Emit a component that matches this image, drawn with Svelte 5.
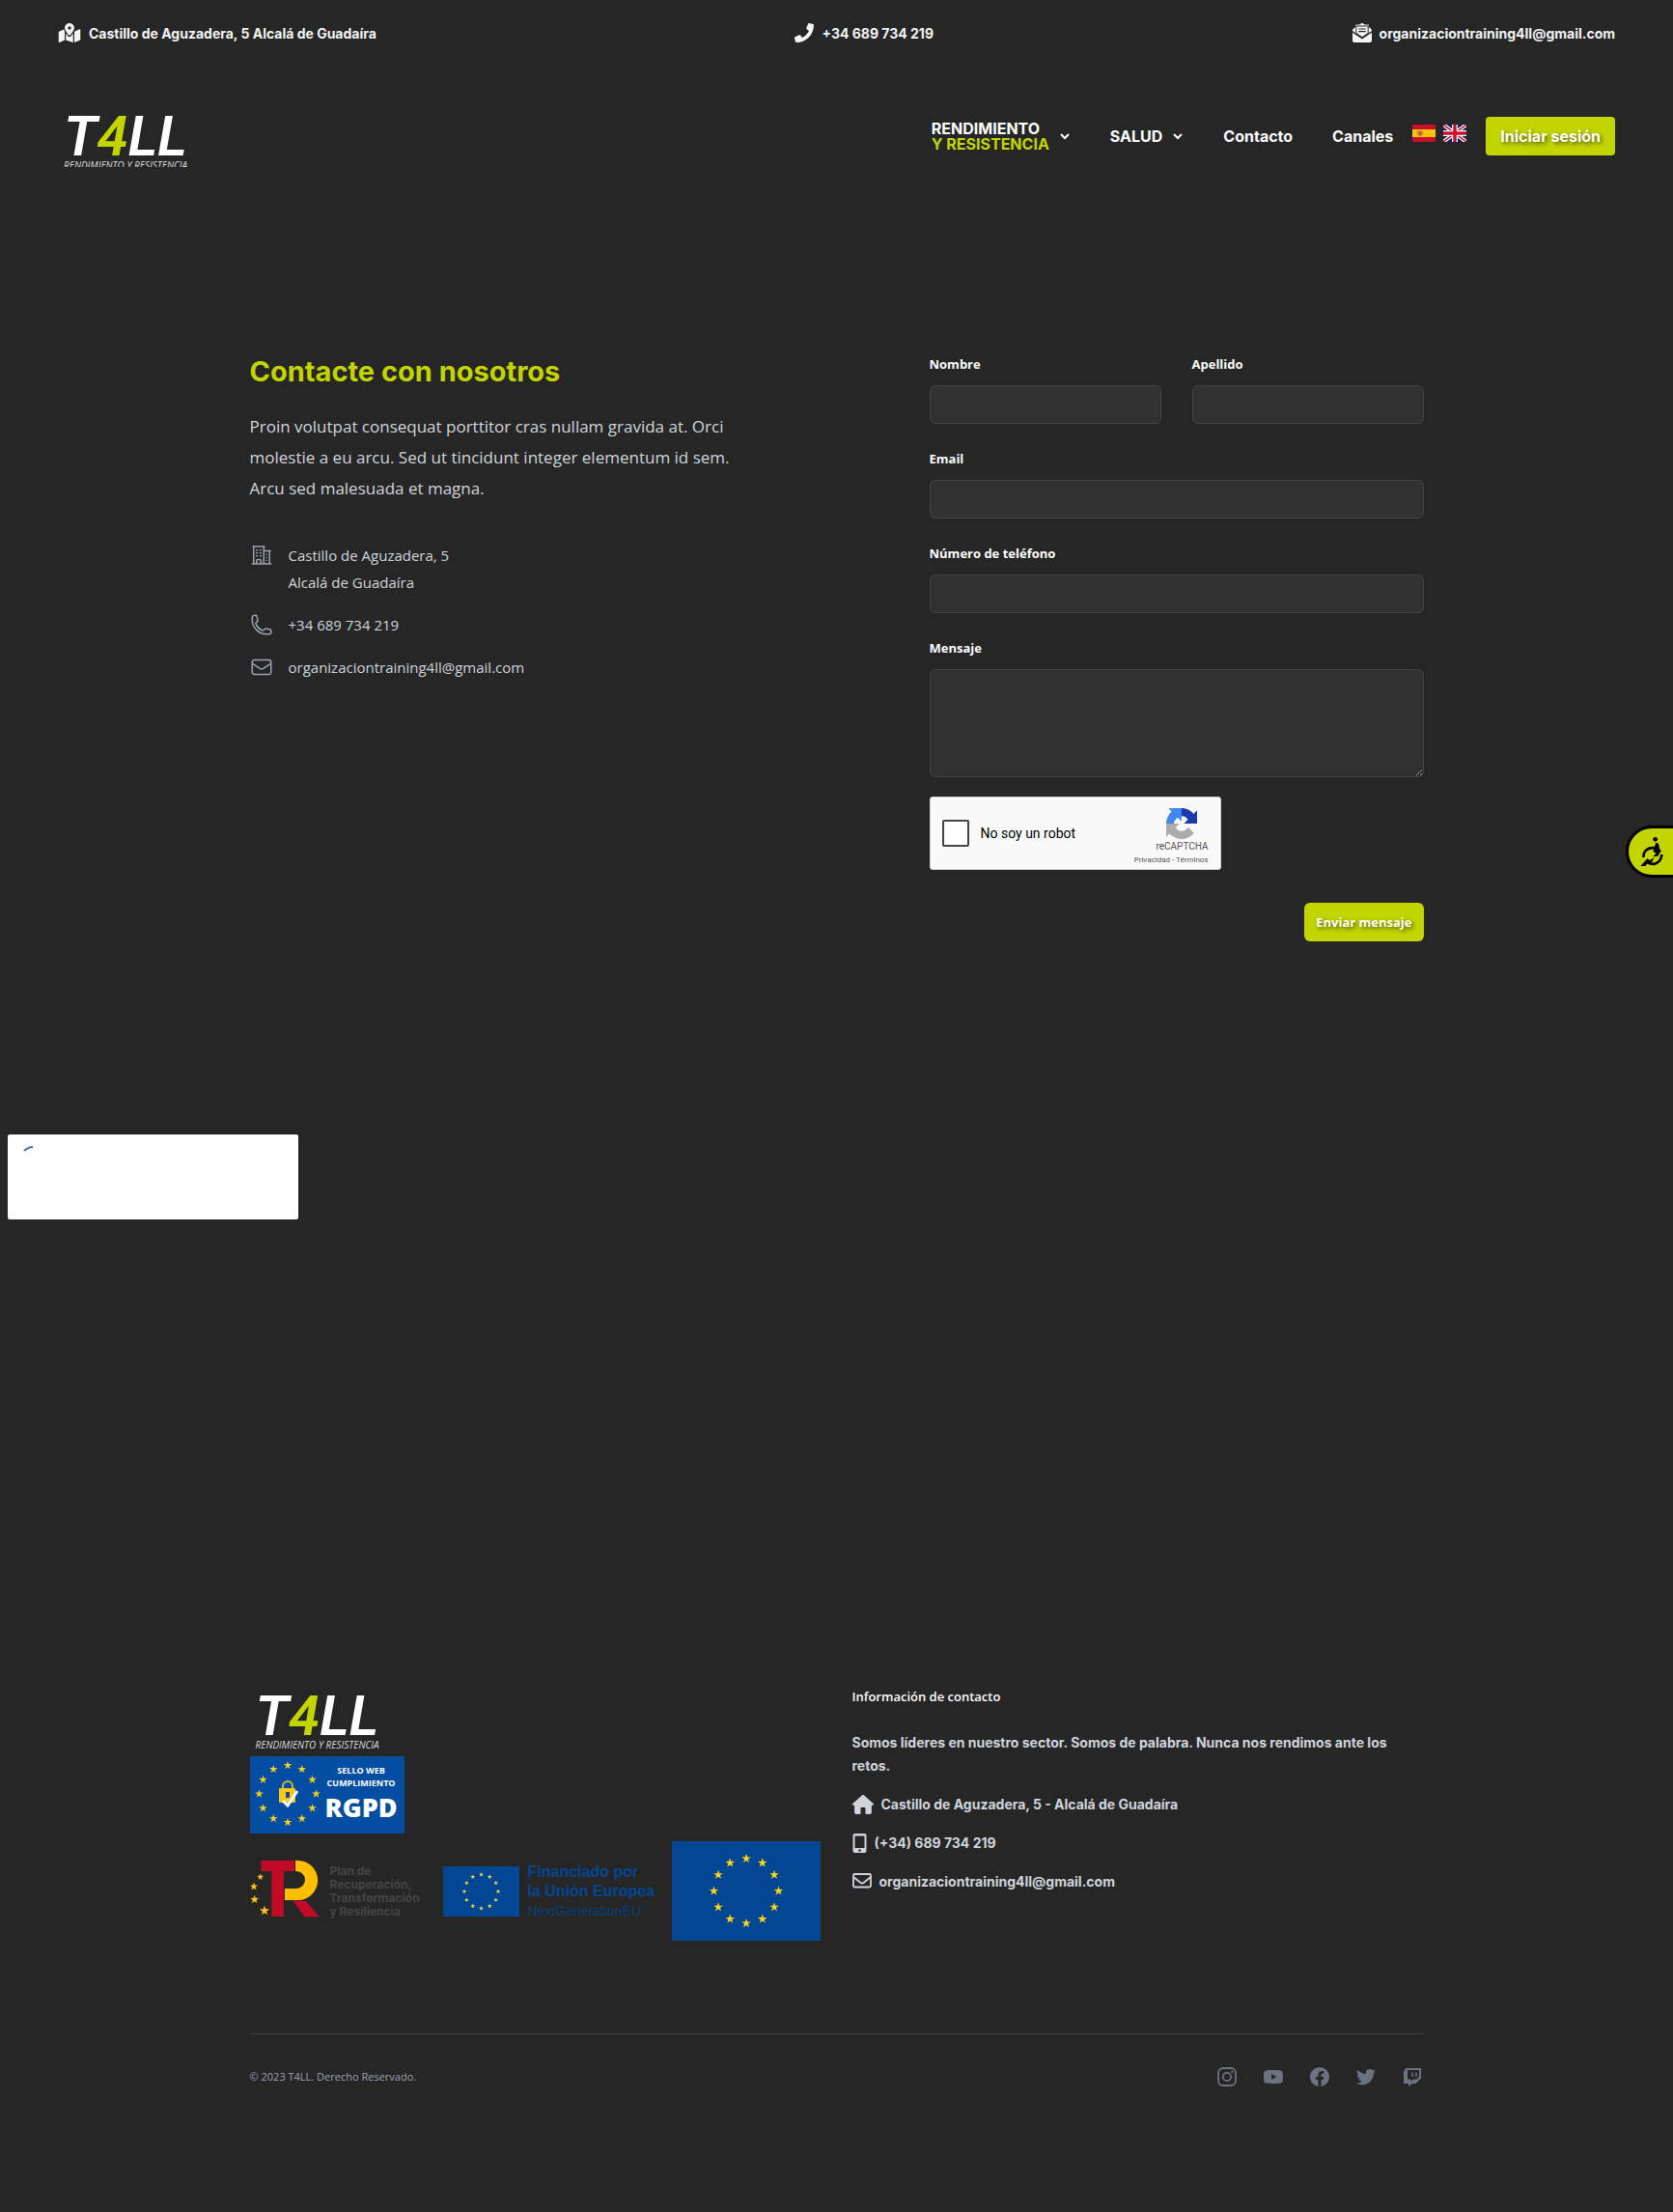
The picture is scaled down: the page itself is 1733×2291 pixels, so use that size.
<script>
  function star(cx, cy, r) {
    const pts = [];
    for (let i = 0; i < 10; i++) {
      const a = (Math.PI / 5) * i - Math.PI / 2;
      const d = i % 2 ? r * 0.4 : r;
      pts.push(`${(cx + d * Math.cos(a)).toFixed(2)},${(cy + d * Math.sin(a)).toFixed(2)}`);
    }
    return pts.join(' ');
  }
  function ring(cx, cy, radius, r) {
    return Array.from({ length: 12 }, (_, i) => {
      const a = (Math.PI / 6) * i;
      return star(cx + radius * Math.sin(a), cy - radius * Math.cos(a), r);
    });
  }
  const planStars = [star(89, 609, 11), star(69, 639, 13), star(71, 679, 14), star(102, 714, 16)];
</script>

{#snippet brand()}
  <span class="brand-name">T<b>4</b>LL</span>
  <span class="brand-tag">RENDIMIENTO Y RESISTENCIA</span>
{/snippet}

{#snippet chevron()}
  <svg class="chevron" viewBox="0 0 12 12" aria-hidden="true"><path d="M2 4l4 4 4-4" fill="none" stroke="currentColor" stroke-width="2" /></svg>
{/snippet}

<header>
  <div class="topbar">
    <span class="contact">
      <svg width="24" height="20" viewBox="0 0 576 512" aria-hidden="true"><path fill="currentColor" d="M288 0c-69.59 0-126 56.41-126 126 0 56.26 82.35 158.8 113.9 196.02 6.39 7.54 17.82 7.54 24.2 0C331.65 284.8 414 182.26 414 126 414 56.41 357.59 0 288 0zm0 168c-23.2 0-42-18.8-42-42s18.8-42 42-42 42 18.8 42 42-18.8 42-42 42zM20.12 215.95A32.006 32.006 0 0 0 0 245.66v250.32c0 11.32 11.43 19.06 21.94 14.86L160 448V214.92c-8.84-15.98-16.07-31.54-21.25-46.42L20.12 215.95zM288 359.67c-14.07 0-27.38-6.18-36.51-16.96-19.66-23.2-40.57-49.62-59.49-76.72v182l192 64V266c-18.92 27.09-39.82 53.52-59.49 76.72-9.13 10.77-22.44 16.95-36.51 16.95zm266.06-198.51L416 224v288l139.88-55.95A31.996 31.996 0 0 0 576 426.34V176.02c0-11.32-11.43-19.06-21.94-14.86z" /></svg>
      Castillo de Aguzadera, 5 Alcalá de Guadaíra
    </span>
    <span class="contact">
      <svg width="20" height="20" viewBox="0 0 512 512" aria-hidden="true"><path fill="currentColor" d="M493.4 24.6l-104-24c-11.3-2.6-22.9 3.3-27.5 13.9l-48 112c-4.2 9.8-1.4 21.3 6.9 28l60.6 49.6c-36 76.7-98.9 140.5-177.2 177.2l-49.6-60.6c-6.8-8.3-18.2-11.1-28-6.9l-112 48C3.9 366.5-2 378.1.6 389.4l24 104C27.1 504.2 36.7 512 48 512c256.1 0 464-207.5 464-464 0-11.2-7.7-20.9-18.6-23.4z" /></svg>
      +34 689 734 219
    </span>
    <span class="contact">
      <svg width="20" height="20" viewBox="0 0 20 20" aria-hidden="true"><path fill="currentColor" d="M10 0c.9 0 1.7.7 2.6 1.4h3c.8 0 1.3.6 1.3 1.3v1.4l2.3 1.9c.5.4.8.9.8 1.5v.6L10 14.8 0 8.1v-.6c0-.6.3-1.1.8-1.5l2.3-1.9V2.7c0-.7.5-1.3 1.3-1.3h3C8.3.7 9.1 0 10 0z" /><path fill="currentColor" d="M0 9.8l10 6.7 10-6.7v8.3c0 1-.8 1.9-1.9 1.9H1.9C.8 20 0 19.1 0 18.1z" /><path d="M3.8 3v7.3l6.2 4.3 6.2-4.3V3z" fill="#f4f4f4" stroke="#262626" stroke-width="1" /><path d="M6.3 6h7.4M6.3 8.7h7.4" stroke="#262626" stroke-width="1.2" /></svg>
      organizaciontraining4ll@gmail.com
    </span>
  </div>
  <div class="navbar">
    <a class="brand clipped" href="#inicio">{@render brand()}</a>
    <nav>
      <button class="nav-item two-line" type="button"><span>RENDIMIENTO<br /><em>Y RESISTENCIA</em></span>{@render chevron()}</button>
      <button class="nav-item" type="button">SALUD{@render chevron()}</button>
      <a class="nav-item" href="#contacto">Contacto</a>
      <a class="nav-item" href="#canales">Canales</a>
    </nav>
    <div class="flags">
      <button type="button" aria-label="Español">
        <svg viewBox="0 0 24 18" width="24" height="18"><rect width="24" height="18" rx="1" fill="#c8102e" /><rect y="5" width="24" height="8" fill="#ffc400" /><path d="M6 6.5h4v3.5a2 2 0 0 1-4 0z" fill="#c4633b" /><path d="M5 6v5M11 7v4" stroke="#b08a5a" /></svg>
      </button>
      <button type="button" aria-label="English">
        <svg viewBox="0 0 24 18" width="24" height="18"><rect width="24" height="18" rx="1" fill="#012169" /><path d="M0 0l24 18M24 0L0 18" stroke="#fff" stroke-width="4" /><path d="M0 0l24 18M24 0L0 18" stroke="#c8102e" stroke-width="1.5" /><path d="M12 0v18M0 9h24" stroke="#fff" stroke-width="6" /><path d="M12 0v18M0 9h24" stroke="#c8102e" stroke-width="3.5" /></svg>
      </button>
    </div>
    <button class="primary login" type="button">Iniciar sesión</button>
  </div>
</header>

<main>
  <section class="intro">
    <h1>Contacte con nosotros</h1>
    <p>Proin volutpat consequat porttitor cras nullam gravida at. Orci molestie a eu arcu. Sed ut tincidunt integer elementum id sem. Arcu sed malesuada et magna.</p>
    <ul>
      <li>
        <svg viewBox="0 0 24 24" aria-hidden="true"><path d="M2.25 21h19.5m-18-18v18m10.5-18v18m6-13.5V21M6.75 6.75h.75m-.75 3h.75m-.75 3h.75m3-6h.75m-.75 3h.75m-.75 3h.75M6.75 21v-3.375c0-.621.504-1.125 1.125-1.125h2.25c.621 0 1.125.504 1.125 1.125V21M3 3h12m-.75 4.5H21m-3.75 3.75h.008v.008h-.008v-.008zm0 3h.008v.008h-.008v-.008zm0 3h.008v.008h-.008v-.008z" /></svg>
        <span>Castillo de Aguzadera, 5<br />Alcalá de Guadaíra</span>
      </li>
      <li>
        <svg viewBox="0 0 24 24" aria-hidden="true"><path d="M2.25 6.75c0 8.284 6.716 15 15 15h2.25a2.25 2.25 0 002.25-2.25v-1.372c0-.516-.351-.966-.852-1.091l-4.423-1.106c-.44-.11-.902.055-1.173.417l-.97 1.293c-.282.376-.769.542-1.21.38a12.035 12.035 0 01-7.143-7.143c-.162-.441.004-.928.38-1.21l1.293-.97c.363-.271.527-.734.417-1.173L6.963 3.102a1.125 1.125 0 00-1.091-.852H4.5A2.25 2.25 0 002.25 4.5v2.25z" /></svg>
        <a href="tel:+34689734219">+34 689 734 219</a>
      </li>
      <li>
        <svg viewBox="0 0 24 24" aria-hidden="true"><path d="M21.75 6.75v10.5a2.25 2.25 0 01-2.25 2.25h-15a2.25 2.25 0 01-2.25-2.25V6.75m19.5 0A2.25 2.25 0 0019.5 4.5h-15a2.25 2.25 0 00-2.25 2.25m19.5 0v.243a2.25 2.25 0 01-1.07 1.916l-7.5 4.615a2.25 2.25 0 01-2.36 0L3.32 8.91a2.25 2.25 0 01-1.07-1.916V6.75" /></svg>
        <a href="mailto:organizaciontraining4ll@gmail.com">organizaciontraining4ll@gmail.com</a>
      </li>
    </ul>
  </section>

  <form>
    <div class="fields">
      <div class="field"><label for="nombre">Nombre</label><input id="nombre" type="text" /></div>
      <div class="field"><label for="apellido">Apellido</label><input id="apellido" type="text" /></div>
      <div class="field wide"><label for="email">Email</label><input id="email" type="email" /></div>
      <div class="field wide"><label for="telefono">Número de teléfono</label><input id="telefono" type="tel" /></div>
      <div class="field wide"><label for="mensaje">Mensaje</label><textarea id="mensaje"></textarea></div>
    </div>
    <div class="captcha">
      <input id="robot" type="checkbox" />
      <label for="robot">No soy un robot</label>
      <div class="captcha-brand">
        <div class="captcha-mark">
          <svg viewBox="0 0 64 64" width="32" height="32" aria-hidden="true">
            <path fill="#1c3aa9" d="M64 31.955l-.033-1.37V4.687l-7.16 7.16C50.948 4.674 42.033.093 32.05.093c-10.4 0-19.622 4.96-25.458 12.64l11.736 11.86a15.55 15.55 0 0 1 4.754-5.334c2.05-1.6 4.952-2.906 8.968-2.906.485 0 .86.057 1.135.163 4.976.393 9.288 3.14 11.828 7.124l-8.307 8.307L64 31.953" />
            <path fill="#4285f4" d="M31.862.094l-1.37.033H4.594l7.16 7.16C4.58 13.147 0 22.06 0 32.046c0 10.4 4.96 19.622 12.64 25.458L24.5 45.768a15.55 15.55 0 0 1-5.334-4.754c-1.6-2.05-2.906-4.952-2.906-8.968 0-.485.057-.86.163-1.135.393-4.976 3.14-9.288 7.124-11.828l8.307 8.307L31.86.095" />
            <path fill="#ababab" d="M.001 32.045l.033 1.37v25.898l7.16-7.16c5.86 7.173 14.774 11.754 24.76 11.754 10.4 0 19.622-4.96 25.458-12.64l-11.736-11.86a15.55 15.55 0 0 1-4.754 5.334c-2.05 1.6-4.952 2.906-8.968 2.906-.485 0-.86-.057-1.135-.163-4.976-.393-9.288-3.14-11.828-7.124l8.307-8.307c-10.522.04-22.4.066-27.295-.005" />
          </svg>
          <span class="captcha-name">reCAPTCHA</span>
        </div>
        <span class="captcha-links"><a href="#privacidad">Privacidad</a> - <a href="#terminos">Términos</a></span>
      </div>
    </div>
    <button class="primary send" type="submit">Enviar mensaje</button>
  </form>
</main>

<div class="challenge">
  <svg width="12" height="8" viewBox="0 0 12 8" aria-hidden="true"><path d="M1 6q4-4 9-4" fill="none" stroke="#4a69c8" stroke-width="2" /></svg>
</div>

<footer>
  <div class="footer-grid">
    <div class="logos">
      <a class="brand" href="#inicio">{@render brand()}</a>
      <div class="rgpd">
        <svg width="78" height="80" viewBox="0 0 78 80" aria-hidden="true">
          {#each ring(39, 39, 29.5, 4.5) as pts}<polygon points={pts} fill="#f2cf1d" />{/each}
          <path d="M34 35v-4a5 5 0 0 1 10 0v4" fill="none" stroke="#d8b52a" stroke-width="2" />
          <rect x="30" y="33" width="17" height="15" rx="1" fill="#f8c81c" />
          <path d="M37 37h4v6h-4z" fill="#1b4a86" />
          <path d="M34 46l5 5 10-15" fill="none" stroke="#fff" stroke-width="3" />
        </svg>
        <div class="rgpd-text"><span>SELLO WEB</span><span>CUMPLIMIENTO</span><strong>RGPD</strong></div>
      </div>
      <div class="funding">
        <svg class="tr" width="72" height="66" viewBox="57 555 216 198" aria-hidden="true">
          <path fill="#c00a26" d="M92 558h103v33h-33v141h-38V591H92zM190 683h40l42 50h-45z" />
          <path fill="#ffbf00" d="M198 558h8a61 61 0 0 1 0 123h-41v-36h36a27 27 0 0 0 0-54h-3z" />
          {#each planStars as pts}<polygon points={pts} fill="#ffc21a" />{/each}
        </svg>
        <p class="plan">Plan de<br />Recuperación,<br />Transformación<br />y Resiliencia</p>
        <svg class="flag-small" width="79" height="52" viewBox="0 0 79 52" aria-hidden="true">
          <rect width="79" height="52" fill="#034694" />
          {#each ring(39.5, 26, 17.5, 2.6) as pts}<polygon points={pts} fill="#f5d74a" />{/each}
        </svg>
        <p class="next"><strong>Financiado por<br />la Unión Europea</strong><span>NextGenerationEU</span></p>
        <svg class="flag-big" width="154" height="103" viewBox="0 0 154 103" aria-hidden="true">
          <rect width="154" height="103" fill="#034694" />
          {#each ring(77, 51.5, 33.5, 5) as pts}<polygon points={pts} fill="#ffd51a" />{/each}
        </svg>
      </div>
    </div>
    <div class="info">
      <h2>Información de contacto</h2>
      <p>Somos líderes en nuestro sector. Somos de palabra. Nunca nos rendimos ante los retos.</p>
      <span class="row">
        <svg width="22" height="20" viewBox="0 0 22 20" aria-hidden="true"><path fill="currentColor" d="M11 0c.5 0 .8.2 1.1.4l9.600 8.700c.6.700.2 1.700-.7 1.700h-1.100V18c0 1.200-.8 2-2 2H14.500c-.7 0-1-.5-1-1v-5c0-.7-.5-1-1-1h-3c-.5 0-1 .3-1 1v5c0 .5-.3 1-1 1H4.100c-1.200 0-2-.8-2-2v-7.200H1c-.9 0-1.300-1-.7-1.700L9.900.4c.3-.2.6-.4 1.100-.4z" /></svg>
        Castillo de Aguzadera, 5 - Alcalá de Guadaíra
      </span>
      <span class="row">
        <svg width="15" height="20" viewBox="0 0 15 20" aria-hidden="true"><path fill="currentColor" fill-rule="evenodd" d="M2.5 0h10A2 2 0 0 1 14.5 2v16a2 2 0 0 1-2 2h-10a2 2 0 0 1-2-2V2a2 2 0 0 1 2-2zm0 2.500v12.500h10V2.500zM7.500 16.200a1.300 1.300 0 1 0 0 2.600 1.300 1.300 0 0 0 0-2.600z" /></svg>
        (+34) 689 734 219
      </span>
      <span class="row">
        <svg width="20" height="20" viewBox="0 0 20 20" aria-hidden="true"><rect x="1" y="2" width="18" height="13.5" rx="1.5" fill="none" stroke="currentColor" stroke-width="1.8" /><path d="M1 5l7.5 6c1 .8 2 .8 3 0L19 5" fill="none" stroke="currentColor" stroke-width="1.8" /></svg>
        organizaciontraining4ll@gmail.com
      </span>
    </div>
  </div>
  <div class="legal">
    <p>© 2023 T4LL. Derecho Reservado.</p>
    <div class="social">
      <a href="#instagram" aria-label="Instagram"><svg viewBox="0 0 24 24"><rect x="3" y="3" width="18" height="18" rx="5" fill="none" stroke="currentColor" stroke-width="1.8" /><circle cx="12" cy="12" r="4.2" fill="none" stroke="currentColor" stroke-width="1.8" /><circle cx="17.3" cy="6.7" r="1.2" fill="currentColor" /></svg></a>
      <a href="#youtube" aria-label="YouTube"><svg viewBox="0 0 24 24"><path fill="currentColor" fill-rule="evenodd" d="M19.812 5.418c.861.23 1.538.907 1.768 1.768C21.998 8.746 22 12 22 12s0 3.255-.418 4.814a2.504 2.504 0 0 1-1.768 1.768c-1.56.419-7.814.419-7.814.419s-6.255 0-7.814-.419a2.505 2.505 0 0 1-1.768-1.768C2 15.255 2 12 2 12s0-3.255.417-4.814a2.507 2.507 0 0 1 1.768-1.768C5.744 5 11.998 5 11.998 5s6.255 0 7.814.418zM15.194 12 10 15V9l5.194 3z" /></svg></a>
      <a href="#facebook" aria-label="Facebook"><svg viewBox="0 0 24 24"><path fill="currentColor" d="M22 12c0-5.523-4.477-10-10-10S2 6.477 2 12c0 4.991 3.657 9.128 8.438 9.878v-6.987h-2.54V12h2.54V9.797c0-2.506 1.492-3.89 3.777-3.89 1.094 0 2.238.195 2.238.195v2.46h-1.26c-1.243 0-1.63.771-1.63 1.562V12h2.773l-.443 2.89h-2.33v6.988C18.343 21.128 22 16.991 22 12z" /></svg></a>
      <a href="#twitter" aria-label="Twitter"><svg viewBox="0 0 24 24"><path fill="currentColor" d="M8.29 20.251c7.547 0 11.675-6.253 11.675-11.675 0-.178 0-.355-.012-.53A8.348 8.348 0 0022 5.92a8.19 8.19 0 01-2.357.646 4.118 4.118 0 001.804-2.27 8.224 8.224 0 01-2.605.996 4.107 4.107 0 00-6.993 3.743 11.65 11.65 0 01-8.457-4.287 4.106 4.106 0 001.27 5.477A4.072 4.072 0 012.8 9.713v.052a4.105 4.105 0 003.292 4.022 4.095 4.095 0 01-1.853.07 4.108 4.108 0 003.834 2.85A8.233 8.233 0 012 18.407a11.616 11.616 0 006.29 1.84" /></svg></a>
      <a href="#twitch" aria-label="Twitch"><svg viewBox="0 0 24 24"><path fill="currentColor" fill-rule="evenodd" d="M5.5 3H21v10.5L15.5 19H12l-3 2.5H8V19H3V6.5zM7 5v9.5h3.5V17l2.5-2.5h3.5L19 12V5z" /><path d="M12 7.5v4.500M16 7.500v4.500" stroke="currentColor" stroke-width="1.6" /></svg></a>
    </div>
  </div>
</footer>

<button class="a11y" type="button" aria-label="Accesibilidad">
  <svg width="24" height="32" viewBox="178 108 72 96" aria-hidden="true">
    <circle cx="225" cy="118" r="7" />
    <path d="M227 128l8 3 3 15 5 8-10 16-15 2 10-11-10-5z" />
    <path d="M188 174c0-20 14-32 36-29M245 165c-2 26-24 36-44 25" fill="none" stroke="#000" stroke-width="8" />
    <path d="M179 201l21-23 8 5 14-9-8 16-14 3-6 8z" />
  </svg>
</button>

<style>
  :global(body) {
    background: #262626;
    color: #fff;
    font-family: 'Open Sans', 'Noto Sans', sans-serif;
  }
  :global(*) { box-sizing: border-box; }
  svg { display: block; flex: none; }
  a { color: inherit; text-decoration: none; }
  button { border: 0; padding: 0; background: none; color: inherit; font: inherit; cursor: pointer; }
  h1, h2, p, ul { margin: 0; padding: 0; }

  header { font-family: Inter, sans-serif; font-weight: 700; }
  .topbar, .navbar { display: flex; align-items: center; padding: 0 60px; }
  .topbar { justify-content: space-between; height: 68px; color: #f4f4f4; font-size: 14px; }
  .contact { display: flex; align-items: center; gap: 8px; }
  .navbar { height: 146px; }

  .brand { display: flex; flex-direction: column; width: 140px; height: 74px; padding-left: 6px; font-family: Roboto, sans-serif; font-style: italic; color: #fff; white-space: nowrap; }
  .brand-name { font-size: 58px; line-height: 64px; font-weight: 600; }
  .brand-name b { font-weight: 600; color: #c2d500; }
  .brand-tag { margin-top: -9px; font-family: 'Open Sans', sans-serif; font-size: 10px; line-height: 14px; font-weight: 400; color: #ddd; }
  .clipped { align-self: flex-start; height: 64px; margin-top: 41px; overflow: hidden; }

  nav { display: flex; align-items: center; gap: 41px; margin-left: auto; }
  .nav-item { display: flex; align-items: center; gap: 10px; font-size: 16px; line-height: 24px; }
  .two-line { line-height: 16px; text-align: left; }
  .nav-item em { font-style: normal; color: #c2d500; }
  .chevron { width: 12px; height: 12px; }
  .flags { display: flex; gap: 8px; margin: 0 20px; padding-bottom: 6px; }
  .primary { height: 40px; background: #c2d500; color: #fff; text-shadow: 2px 2px 4px rgb(0 0 0 / 60%); }
  .login { padding: 0 15px; border-radius: 4px; font-size: 16px; font-weight: 700; }

  main { display: grid; grid-template-columns: 1fr 1fr; max-width: 1280px; margin: 0 auto; padding-top: 151px; }
  .intro { padding: 0 32px; }
  h1 { font: 700 29px/40px Inter, sans-serif; color: #c2d500; }
  .intro p { max-width: 512px; margin-top: 21px; font-size: 17px; line-height: 32px; color: #d1d5db; }
  .intro ul { display: grid; gap: 16px; margin-top: 39px; list-style: none; font-size: 15px; line-height: 28px; color: #d1d5db; }
  .intro li { display: flex; gap: 16px; }
  .intro li svg { width: 24px; height: 28px; fill: none; stroke: #9ca3af; stroke-width: 1.5; stroke-linecap: round; stroke-linejoin: round; }

  form { display: flex; flex-direction: column; padding: 0 32px 0 96px; }
  .fields { display: grid; grid-template-columns: 1fr 1fr; gap: 24px 32px; }
  .field { display: flex; flex-direction: column; gap: 10px; min-width: 0; }
  .wide { grid-column: 1 / -1; }
  .field label { font-size: 13px; line-height: 24px; font-weight: 700; }
  .field input, textarea { width: 100%; height: 40px; margin: 0; padding: 8px 14px; border: 1px solid #444; border-radius: 6px; background: #313131; color: #fff; font: 14px/24px 'Open Sans', sans-serif; }
  .field textarea { height: 112px; resize: vertical; }

  .captcha { display: flex; align-items: center; width: 302px; height: 76px; margin-top: 20px; padding: 0 12px; border: 1px solid #d3d3d3; border-radius: 3px; background: #f9f9f9; color: #000; font-family: Roboto, sans-serif; }
  .captcha input { appearance: none; width: 28px; height: 28px; margin: 0 12px 0 0; border: 2px solid #444; border-radius: 2px; background: #fff; }
  .captcha label { font-size: 14px; }
  .captcha-brand { display: flex; flex-direction: column; align-items: flex-end; margin-left: auto; padding-top: 8px; color: #555; }
  .captcha-mark { display: flex; flex-direction: column; align-items: center; }
  .captcha-name { font-size: 10px; line-height: 16px; }
  .captcha-links { font-size: 8px; line-height: 12px; }
  .send { align-self: flex-end; margin-top: 34px; padding: 0 12px; border-radius: 6px; font-size: 13px; font-weight: 700; }

  .challenge { width: 301px; height: 88px; margin: 200px 0 0 8px; padding: 11px 16px; border-radius: 2px; background: #fff; }

  footer { max-width: 1280px; margin: 482px auto 0; padding: 0 32px 120px; }
  .footer-grid { display: grid; grid-template-columns: 1fr 1fr; gap: 32px; }
  .rgpd { display: flex; width: 160px; height: 80px; background: #034ea2; }
  .rgpd-text { display: flex; flex-direction: column; align-items: center; padding-top: 8px; font-size: 9px; line-height: 13px; font-weight: 700; }
  .rgpd-text strong { font-size: 27px; line-height: 37px; }
  .funding { display: flex; align-items: center; height: 103px; margin-top: 8px; }
  .plan { margin-left: 11px; width: 117px; font: 700 12px/14px Inter, sans-serif; color: #454545; }
  .next { margin-left: 9px; width: 149px; font: 400 14px/20px 'Liberation Sans', sans-serif; color: #083f7c; white-space: nowrap; }
  .next strong { display: block; font-size: 16px; line-height: 20px; color: #034694; }

  .info { display: flex; flex-direction: column; font: 700 14px/24px Inter, sans-serif; color: #d1d5db; }
  .info h2 { margin-bottom: 24px; font: 600 13px/24px 'Open Sans', sans-serif; color: #fff; }
  .row { display: flex; align-items: center; gap: 8px; margin-top: 16px; }
  .legal { display: flex; align-items: center; justify-content: space-between; margin-top: 96px; padding-top: 32px; border-top: 1px solid #404040; }
  .legal p { font-size: 11px; line-height: 24px; color: #9ca3af; }
  .social { display: flex; gap: 24px; color: #6b7280; }
  .social svg { width: 24px; height: 24px; }

  .a11y { position: fixed; top: 855px; right: 0; display: flex; align-items: center; width: 49px; height: 54px; padding-left: 12px; border: 3px solid #000; border-right: 0; border-radius: 27px 0 0 27px; background: #c2d500; }
</style>
